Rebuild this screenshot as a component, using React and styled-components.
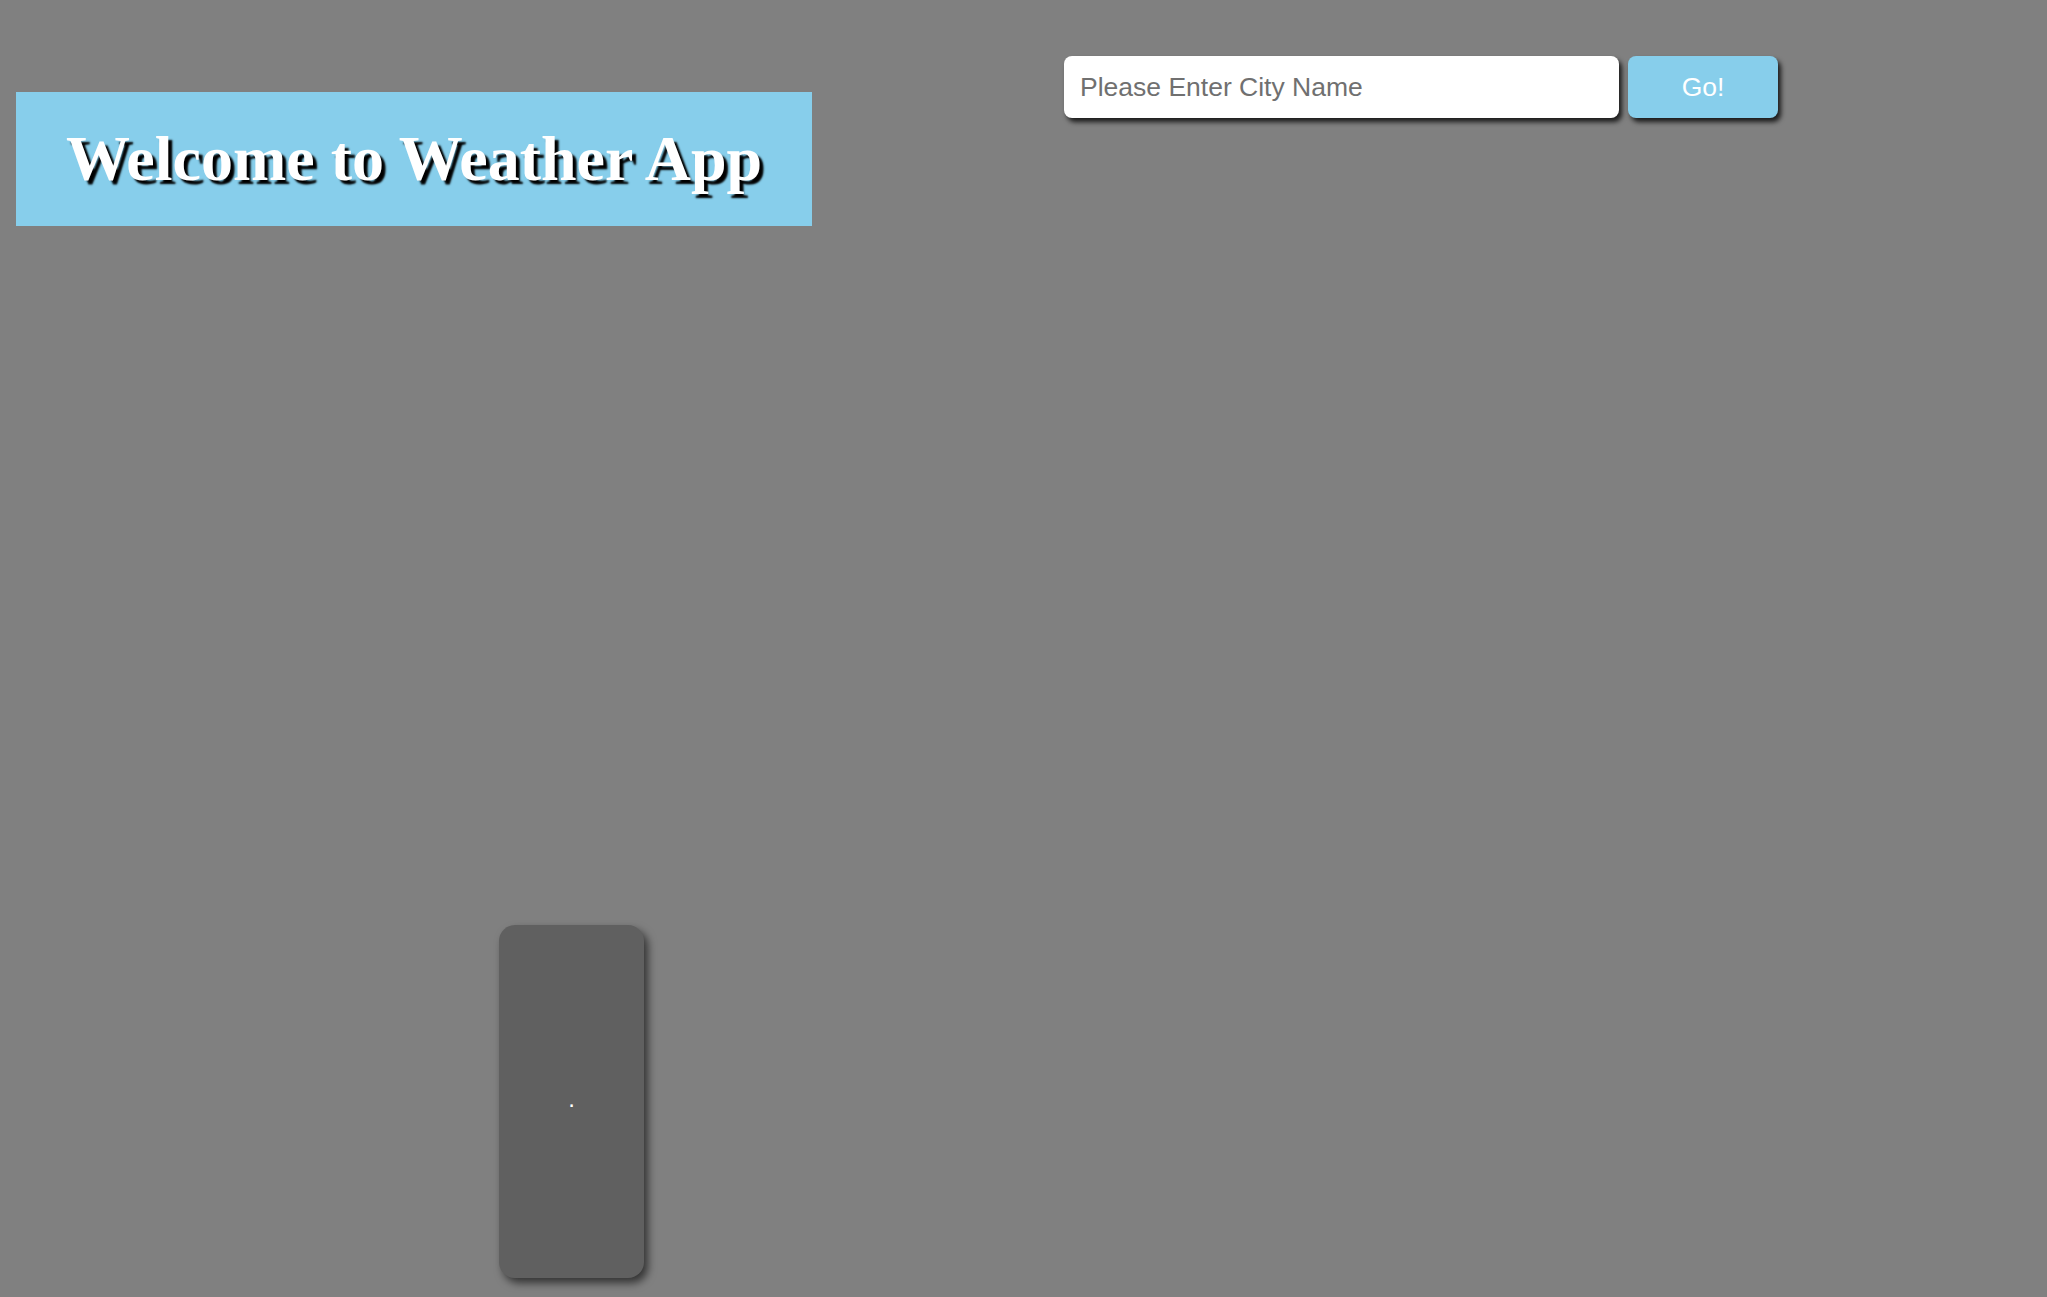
import React from "react";
import styled, { createGlobalStyle } from "styled-components";

const GlobalStyle = createGlobalStyle`
  html, body {
    margin: 0;
    padding: 0;
    background: #808080; /* gray page */
    font-family: "Liberation Sans", Arial, sans-serif;
  }
`;

const Page = styled.div`
  min-height: 1297px;
  box-sizing: border-box;
  padding: 56px 0 0 16px;
`;

const TopRow = styled.div`
  display: flex;
  align-items: flex-start;
`;

const Banner = styled.div`
  width: 796px;
  height: 134px;
  margin-top: 36px;
  background: #87ceeb;
  display: flex;
  align-items: center;
  justify-content: center;
`;

const Title = styled.h1`
  margin: 0;
  font-family: "Liberation Serif", "Times New Roman", serif;
  font-weight: bold;
  font-size: 64px;
  color: white;
  text-shadow: 4px 4px 2px black;
`;

const SearchForm = styled.form`
  display: flex;
  gap: 9px;
  margin-left: 252px;
`;

const CityInput = styled.input`
  width: 555px;
  height: 62px;
  box-sizing: border-box;
  padding: 0 16px;
  border: none;
  border-radius: 8px;
  background: white;
  font-family: "Liberation Sans", Arial, sans-serif;
  font-size: 26.5px;
  color: #333;
  box-shadow: 3px 4px 5px rgba(0, 0, 0, 0.8);
  outline: none;

  &::placeholder {
    color: #707070;
  }
`;

const GoButton = styled.button`
  width: 150px;
  height: 62px;
  border: none;
  border-radius: 8px;
  background: #87ceeb;
  color: white;
  font-family: "Liberation Sans", Arial, sans-serif;
  font-size: 26.5px;
  box-shadow: 3px 4px 5px rgba(0, 0, 0, 0.8);
  cursor: pointer;
`;

const ForecastRow = styled.div`
  display: flex;
  margin-top: 699px;
  padding-left: 483px;
`;

const DayCard = styled.div`
  width: 145px;
  height: 353px;
  box-sizing: border-box;
  padding-bottom: 6px;
  border-radius: 16px;
  background: #606060;
  box-shadow: 4px 5px 8px rgba(0, 0, 0, 0.6);
  display: flex;
  align-items: center;
  justify-content: center;
  color: white;
  font-size: 24px;
`;

function App() {
  return (
    <Page>
      <GlobalStyle />
      <TopRow>
        <Banner>
          <Title>Welcome to Weather App</Title>
        </Banner>
        <SearchForm onSubmit={(e) => e.preventDefault()}>
          <CityInput type="text" placeholder="Please Enter City Name" />
          <GoButton type="submit">Go!</GoButton>
        </SearchForm>
      </TopRow>
      <ForecastRow>
        <DayCard>.</DayCard>
      </ForecastRow>
    </Page>
  );
}

export default App;
